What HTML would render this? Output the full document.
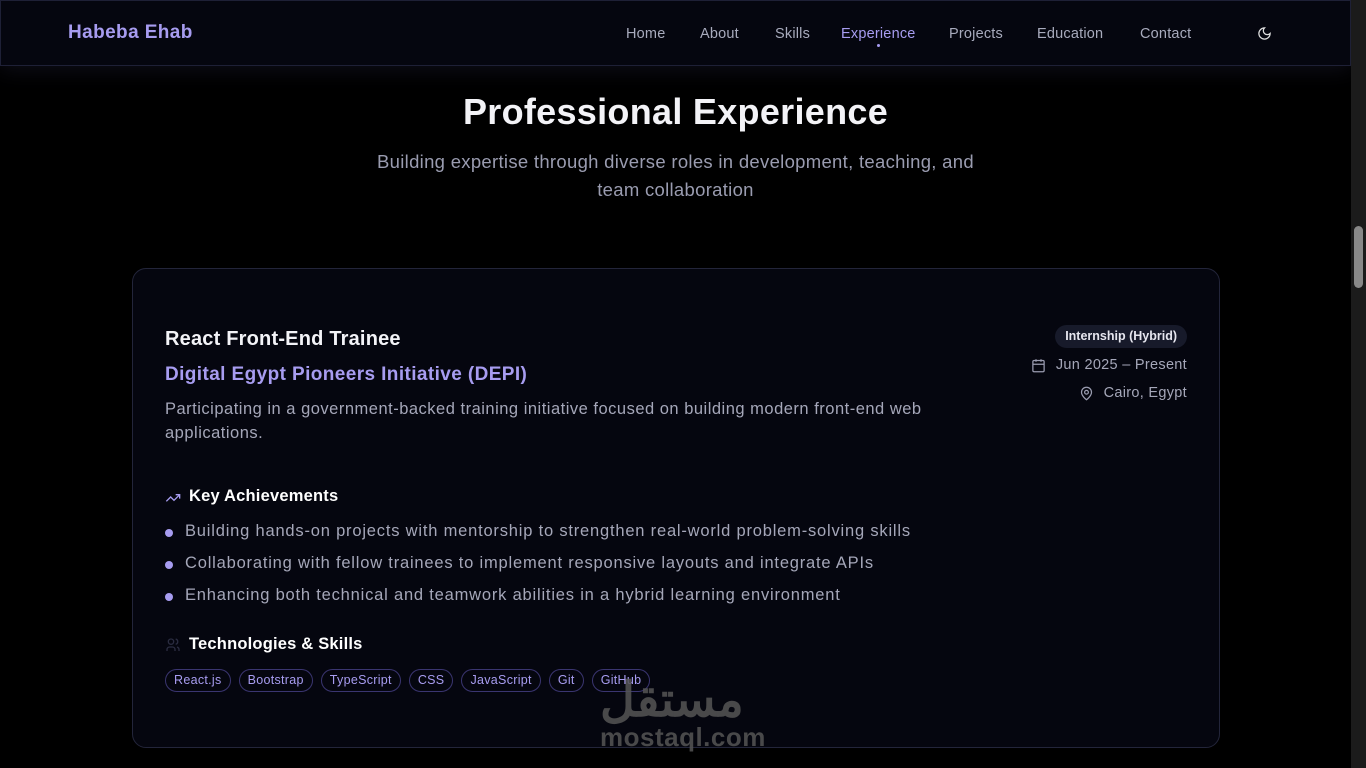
<!DOCTYPE html>
<html><head><style>
*{margin:0;padding:0;box-sizing:border-box}
body{width:1366px;height:768px;background:#000;font-family:"Liberation Sans",sans-serif;overflow:hidden;position:relative;color:#fff}
.nav{position:absolute;left:0;top:0;width:1351px;height:66px;background:#05060f;border:1px solid #1e2036;box-shadow:0 4px 20px rgba(40,40,70,.35)}
.logo{position:absolute;left:67px;top:21px;font-size:19px;font-weight:bold;color:#a79cf0;letter-spacing:.4px}
.links a{position:absolute;top:25px;font-size:14.5px;color:#a8abbd;text-decoration:none;letter-spacing:.2px}
.sb{position:absolute;right:0;top:0;width:15px;height:768px;background:#1b1b1b}
.thumb{position:absolute;right:3px;top:226px;width:9px;height:62px;background:#888;border-radius:5px}
h1{position:absolute;left:0;width:1351px;top:91px;text-align:center;font-size:36px;font-weight:bold;color:#f3f3f7;letter-spacing:.3px}
.sub{position:absolute;left:355px;width:641px;top:148px;text-align:center;font-size:18.5px;line-height:28px;color:#9a9cb0;letter-spacing:.3px}
.card{position:absolute;left:132px;top:268px;width:1088px;height:480px;border:1px solid #23253a;border-radius:14px;background:#05060f}
.t{position:absolute;font-size:14.5px;color:#a5a7b9;letter-spacing:.3px}
.tag{display:inline-block;border:1px solid #3a3570;border-radius:12px;padding:0 8px;height:23px;line-height:21px;font-size:12.5px;color:#a79cf0;margin-right:8px;letter-spacing:.3px}
.dot{position:absolute;left:32px;width:8px;height:8px;border-radius:50%;background:#a79cf0}
.b{font-size:16.5px;letter-spacing:.8px;left:52px}
</style></head><body>
<div class="nav">
<div class="logo">Habeba Ehab</div>
<div class="links">
<a style="left:625px">Home</a><a style="left:699px">About</a><a style="left:774px">Skills</a><a style="left:840px;color:#a79cf0">Experience</a><a style="left:948px">Projects</a><a style="left:1036px">Education</a><a style="left:1139px">Contact</a>
</div>
<div style="position:absolute;left:876px;top:43px;width:3px;height:3px;border-radius:50%;background:#a79cf0"></div>
<svg style="position:absolute;left:1256px;top:25px" width="15" height="15" viewBox="0 0 24 24" fill="none" stroke="#ddd" stroke-width="2"><path d="M12 3a6 6 0 0 0 9 9 9 9 0 1 1-9-9z"/></svg>
</div>
<div class="sb"><div class="thumb"></div></div>
<h1>Professional Experience</h1>
<div class="sub">Building expertise through diverse roles in development, teaching, and team collaboration</div>
<div class="card">
<div style="position:absolute;left:32px;top:59px;font-size:20px;font-weight:bold;color:#f3f3f7;letter-spacing:.2px">React Front-End Trainee</div>
<div style="position:absolute;left:32px;top:95px;font-size:19px;font-weight:bold;color:#a79cf0;letter-spacing:.4px">Digital Egypt Pioneers Initiative (DEPI)</div>
<div style="position:absolute;left:32px;top:128px;width:810px;font-size:16.5px;line-height:24px;color:#a5a7b9;letter-spacing:.5px">Participating in a government-backed training initiative focused on building modern front-end web applications.</div>
<div style="position:absolute;right:32px;top:56px;height:23px;line-height:23px;padding:0 10px;border-radius:12px;background:#171a2a;font-size:12.5px;font-weight:bold;color:#e6e6ef">Internship (Hybrid)</div>
<div class="t" style="right:32px;top:88px">Jun 2025 – Present</div>
<svg style="position:absolute;left:898px;top:89px" width="15" height="15" viewBox="0 0 24 24" fill="none" stroke="#9a9cb0" stroke-width="2"><rect x="3" y="4" width="18" height="18" rx="2"/><path d="M16 2v4M8 2v4M3 10h18"/></svg>
<div class="t" style="right:32px;top:116px">Cairo, Egypt</div>
<svg style="position:absolute;left:946px;top:117px" width="15" height="15" viewBox="0 0 24 24" fill="none" stroke="#9a9cb0" stroke-width="2"><path d="M20 10c0 6-8 12-8 12s-8-6-8-12a8 8 0 0 1 16 0z"/><circle cx="12" cy="10" r="3"/></svg>
<svg style="position:absolute;left:32px;top:221px" width="16" height="16" viewBox="0 0 24 24" fill="none" stroke="#a79cf0" stroke-width="2"><path d="M22 7l-8.5 8.5-5-5L2 17M16 7h6v6"/></svg>
<div style="position:absolute;left:56px;top:218px;font-size:16.5px;font-weight:bold;letter-spacing:.2px">Key Achievements</div>
<div class="dot" style="top:260px"></div><div class="t b" style="top:253px">Building hands-on projects with mentorship to strengthen real-world problem-solving skills</div>
<div class="dot" style="top:292px"></div><div class="t b" style="top:285px">Collaborating with fellow trainees to implement responsive layouts and integrate APIs</div>
<div class="dot" style="top:324px"></div><div class="t b" style="top:317px">Enhancing both technical and teamwork abilities in a hybrid learning environment</div>
<svg style="position:absolute;left:32px;top:368px" width="16" height="16" viewBox="0 0 24 24" fill="none" stroke="#2a2c40" stroke-width="2"><circle cx="9" cy="7" r="4"/><path d="M3 21v-2a4 4 0 0 1 4-4h4a4 4 0 0 1 4 4v2M16 3.1a4 4 0 0 1 0 7.8M21 21v-2a4 4 0 0 0-3-3.9"/></svg>
<div style="position:absolute;left:56px;top:366px;font-size:16.5px;font-weight:bold;letter-spacing:.2px">Technologies &amp; Skills</div>
<div style="position:absolute;left:32px;top:400px"><span class="tag">React.js</span><span class="tag">Bootstrap</span><span class="tag">TypeScript</span><span class="tag">CSS</span><span class="tag">JavaScript</span><span class="tag">Git</span><span class="tag">GitHub</span></div>
</div>
<div style="position:absolute;left:600px;top:672px;font-size:48px;font-weight:bold;color:#555;font-family:'Liberation Sans','Noto Sans CJK SC',sans-serif;opacity:.85">مستقل</div>
<div style="position:absolute;left:600px;top:722px;font-size:26px;font-weight:bold;color:#555;opacity:.85;letter-spacing:.5px">mostaql.com</div>
</body></html>
